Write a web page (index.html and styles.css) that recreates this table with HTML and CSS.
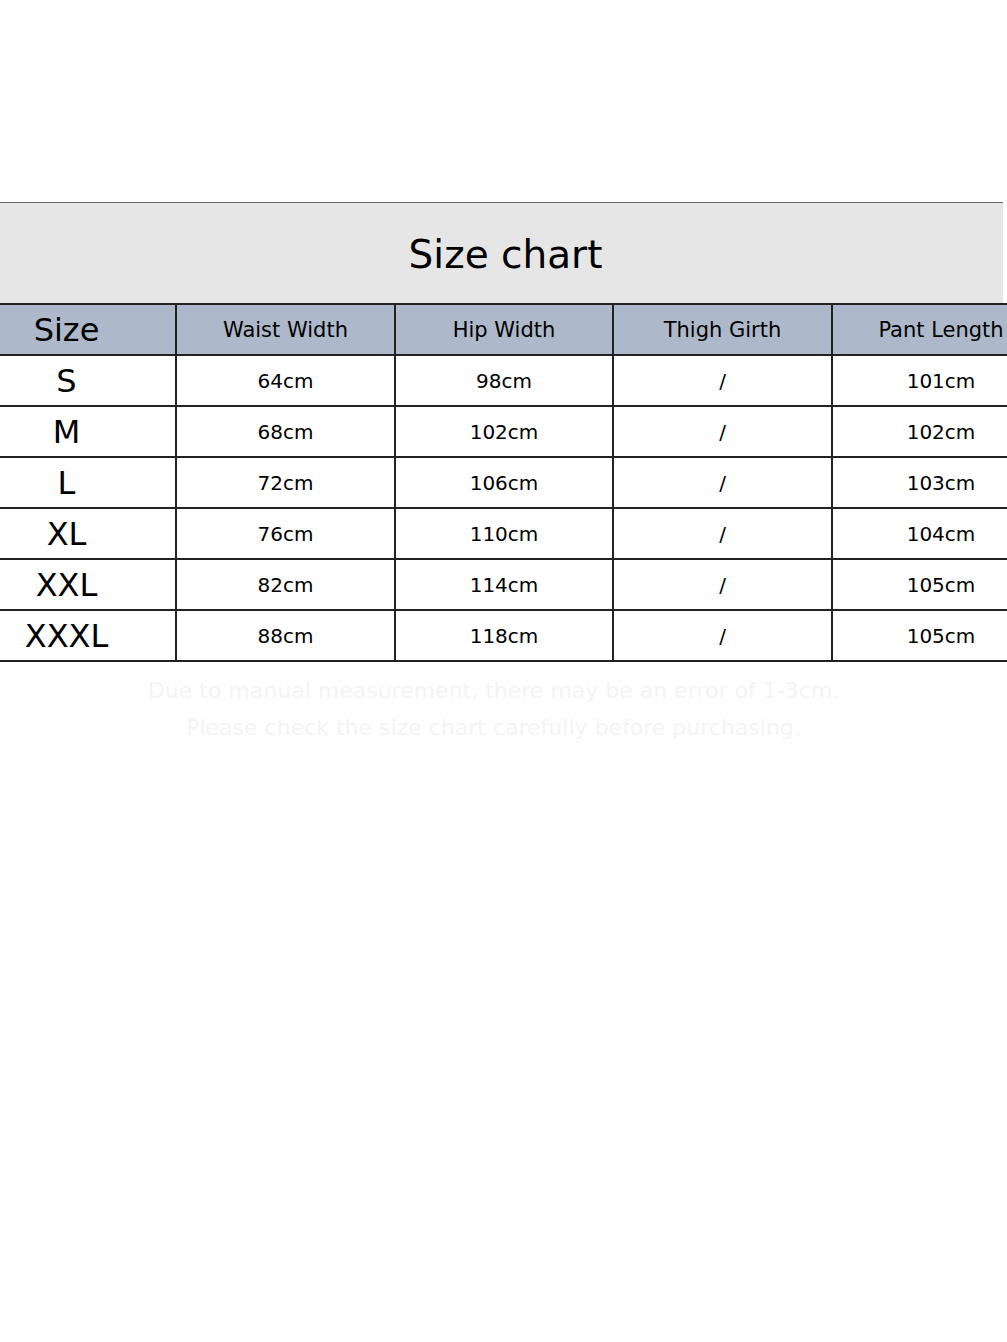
FILE: index.html
```html
<!DOCTYPE html>
<html>
<head>
<meta charset="utf-8">
<link rel="stylesheet" href="styles.css">
</head>
<body>
<div class="page">
  <div class="chart">
    <div class="title">Size chart</div>
    <table class="grid">
      <colgroup>
        <col class="c1"><col class="c2"><col class="c3"><col class="c4"><col class="c5">
      </colgroup>
      <thead>
        <tr><th class="size">Size</th><th>Waist Width</th><th>Hip Width</th><th>Thigh Girth</th><th>Pant Length</th></tr>
      </thead>
      <tbody>
        <tr><td class="size">S</td><td>64cm</td><td>98cm</td><td>/</td><td>101cm</td></tr>
        <tr><td class="size">M</td><td>68cm</td><td>102cm</td><td>/</td><td>102cm</td></tr>
        <tr><td class="size">L</td><td>72cm</td><td>106cm</td><td>/</td><td>103cm</td></tr>
        <tr><td class="size">XL</td><td>76cm</td><td>110cm</td><td>/</td><td>104cm</td></tr>
        <tr><td class="size">XXL</td><td>82cm</td><td>114cm</td><td>/</td><td>105cm</td></tr>
        <tr><td class="size">XXXL</td><td>88cm</td><td>118cm</td><td>/</td><td>105cm</td></tr>
      </tbody>
    </table>
  </div>
  <div class="note">
    <p>Due to manual measurement, there may be an error of 1-3cm.</p>
    <p>Please check the size chart carefully before purchasing.</p>
  </div>
</div>
</body>
</html>
```
FILE: styles.css
```css
html, body {
  margin: 0;
  padding: 0;
  background: #ffffff;
  overflow: hidden;
}
.page {
  width: 1007px;
  height: 1342px;
  overflow: hidden;
  padding-top: 202px;
  box-sizing: border-box;
  font-family: "DejaVu Sans", "Noto Sans", sans-serif;
  color: #000;
}
.chart {
  width: 1060px;
}
.title {
  width: 1003px;
  height: 101px;
  box-sizing: border-box;
  border-top: 1px solid #666;
  background: #e7e6e6;
  display: flex;
  align-items: center;
  justify-content: center;
  font-size: 39px;
  padding-left: 8px;
  padding-top: 2px;
  color: #000;
}
.grid {
  border-collapse: collapse;
  table-layout: fixed;
  width: 1092px;
  margin-left: -42px;
}
.c1 { width: 218px; }
.c2 { width: 219px; }
.c3 { width: 218px; }
.c4 { width: 219px; }
.c5 { width: 218px; }
.grid th, .grid td {
  height: 49px;
  padding: 0;
  text-align: center;
  vertical-align: middle;
  border: 2px solid #222;
  font-weight: normal;
  font-size: 20px;
  white-space: nowrap;
}
.grid th:first-child, .grid td:first-child {
  border-left: none;
}
.grid thead th {
  background: #adb9ca;
  font-size: 21px;
}
.grid thead th.size {
  font-size: 32px;
}
.grid tbody td.size {
  font-size: 32px;
}
.note {
  margin-top: 16px;
  text-align: center;
  padding-right: 20px;
  color: #f4f4f4;
  font-size: 22px;
}
.note p {
  margin: 0 0 12px;
}
```
